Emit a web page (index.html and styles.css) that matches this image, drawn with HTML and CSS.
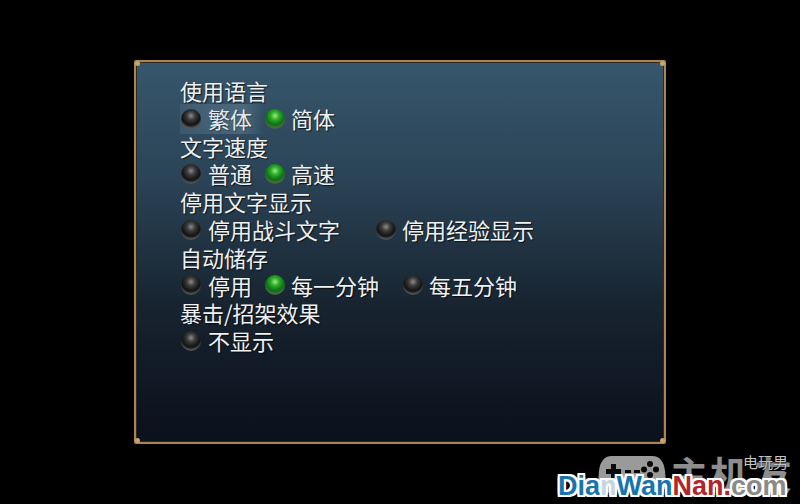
FILE: index.html
```html
<!DOCTYPE html>
<html lang="zh-CN">
<head>
<meta charset="UTF-8">
<meta name="viewport" content="width=device-width, initial-scale=1.0">
<title>设定</title>
<link rel="stylesheet" href="styles.css">
</head>
<body>
<main class="screen">
<!-- Options Panel -->
<section class="panel">
<i class="stud stud-tl"></i><i class="stud stud-tr"></i><i class="stud stud-bl"></i><i class="stud stud-br"></i>
<h2 class="title">使用语言</h2>
<div class="row">
<label class="option option-hover"><span class="radio"></span>繁体</label>
<label class="option"><span class="radio on"></span>简体</label>
</div>
<h2 class="title">文字速度</h2>
<div class="row">
<label class="option"><span class="radio"></span>普通</label>
<label class="option"><span class="radio on"></span>高速</label>
</div>
<h2 class="title">停用文字显示</h2>
<div class="row row-wide">
<label class="option"><span class="radio"></span>停用战斗文字</label>
<label class="option"><span class="radio"></span>停用经验显示</label>
</div>
<h2 class="title">自动储存</h2>
<div class="row row-auto">
<label class="option"><span class="radio"></span>停用</label>
<label class="option"><span class="radio on"></span>每一分钟</label>
<label class="option"><span class="radio"></span>每五分钟</label>
</div>
<h2 class="title">暴击/招架效果</h2>
<div class="row">
<label class="option"><span class="radio"></span>不显示</label>
</div>
</section>

<!-- Watermark -->
<div class="mark">
<svg class="pad" width="68" height="38" viewBox="0 0 68 38">
<path fill="#9a9a9a" d="M14 1h40c8 0 12 6 13 15l1 12c0 6-3 10-8 10-4 0-7-2-10-7l-3-4H21l-3 4c-3 5-6 7-10 7-5 0-8-4-8-10l1-12C2 7 6 1 14 1z"/>
<path fill="#0a0a0a" d="M13 9h5v5h5v5h-5v5h-5v-5H8v-5h5z"/>
<circle fill="#0a0a0a" cx="52" cy="9" r="3"/><circle fill="#0a0a0a" cx="52" cy="20" r="3"/><circle fill="#0a0a0a" cx="46" cy="14.500" r="3"/><circle fill="#0a0a0a" cx="58" cy="14.500" r="3"/>
<rect fill="#0a0a0a" x="27" y="15" width="6" height="3"/><rect fill="#0a0a0a" x="36" y="15" width="6" height="3"/>
</svg>
<span class="mark-big">主机</span>
<span class="mark-big mark-last">友</span>
<span class="mark-small">电玩男</span>
<div class="mark-url"><b class="blue">Dia<span class="fade">n</span>Wan</b><b class="red">Nan.</b><b class="com">com</b></div>
</div>
</main>
</body>
</html>
```

FILE: styles.css
```css
html, body {
margin: 0;
padding: 0;
background-color: #000;
}
.screen {
position: relative;
width: 800px;
height: 504px;
padding-top: 60px;
box-sizing: border-box;
overflow: hidden;
}
.panel {
position: relative;
width: 532px;
height: 384px;
margin-left: 134px;
padding: 15px 0 0 44px;
box-sizing: border-box;
border: 2px solid #a98650;
border-radius: 2px;
background: linear-gradient(#37566c 0%, #2b4457 30%, #17232f 65%, #0a101c 100%);
box-shadow: inset 0 0 0 1px #2e2a22;
font-family: "Noto Sans CJK SC", "Noto Sans", sans-serif;
font-size: 22px;
color: #eef1f2;
text-shadow: 1px 1px 1px rgba(0, 0, 0, 0.7);
}
.stud {
position: absolute;
width: 5px;
height: 5px;
border-radius: 50%;
background-color: #c9a468;
}
.stud-tl { top: -1px; left: -1px; }
.stud-tr { top: -1px; right: -1px; }
.stud-bl { bottom: -1px; left: -1px; }
.stud-br { bottom: -1px; right: -1px; }

.title {
margin: 0;
height: 27.800px;
font-size: 22px;
font-weight: 400;
line-height: 27.800px;
}
.row {
display: flex;
gap: 13px;
height: 27.800px;
line-height: 27.800px;
}
.row-wide { gap: 36px; }
.row-auto { gap: 24px; }
.row-auto .option:first-child { margin-right: -11px; }
.option {
display: flex;
align-items: center;
gap: 7px;
margin-left: 1px;
}
.row .option + .option {
gap: 6px;
margin-left: 0;
}
.option-hover {
position: relative;
}
.option-hover::before {
content: "";
position: absolute;
top: -1px;
bottom: -1px;
left: -1px;
width: 84px;
background: linear-gradient(90deg, rgba(170,200,225,0.1), rgba(170,200,225,0.22) 75%, rgba(170,200,225,0));
}
.radio {
position: relative;
width: 20px;
height: 20px;
border-radius: 50%;
background: radial-gradient(circle at 50% 34%, #8a8a8a 0%, #3a3a3a 26%, #121212 56%, #565656 74%, #2c2c2c 100%);
}
.radio.on {
background: radial-gradient(circle at 50% 34%, #9fe884 0%, #2aaa28 26%, #0c7014 54%, #4a6b3e 72%, #2a3f28 100%);
}

.mark {
position: absolute;
top: 455px;
left: 540px;
width: 260px;
height: 49px;
color: #8d8d8d;
}
.pad {
position: absolute;
top: 0;
left: 58px;
}
.mark-big {
position: absolute;
top: -4px;
left: 130px;
font-family: "Noto Sans CJK SC", sans-serif;
font-size: 38px;
font-weight: 700;
line-height: 44px;
letter-spacing: 2px;
}
.mark-last { left: 214px; }
.mark-small {
position: absolute;
top: -2px;
left: 203px;
font-family: "Noto Sans CJK SC", sans-serif;
font-size: 15px;
line-height: 18px;
color: #c4c4c4;
text-shadow: 0 0 2px #000;
}
.mark-url {
position: absolute;
top: 16px;
left: 18px;
font-family: "Liberation Sans", sans-serif;
font-size: 27px;
line-height: 30px;
white-space: nowrap;
text-shadow: 2px 0 0 #fff, -2px 0 0 #fff, 0 2px 0 #fff, 0 -2px 0 #fff, 2px 2px 0 #fff, -2px 2px 0 #fff, 2px -2px 0 #fff, -2px -2px 0 #fff;
}
.blue { color: #1874ad; }
.fade { color: #c4d6e2; }
.red { color: #b3252a; }
.com { color: #8a8a8a; }
```
